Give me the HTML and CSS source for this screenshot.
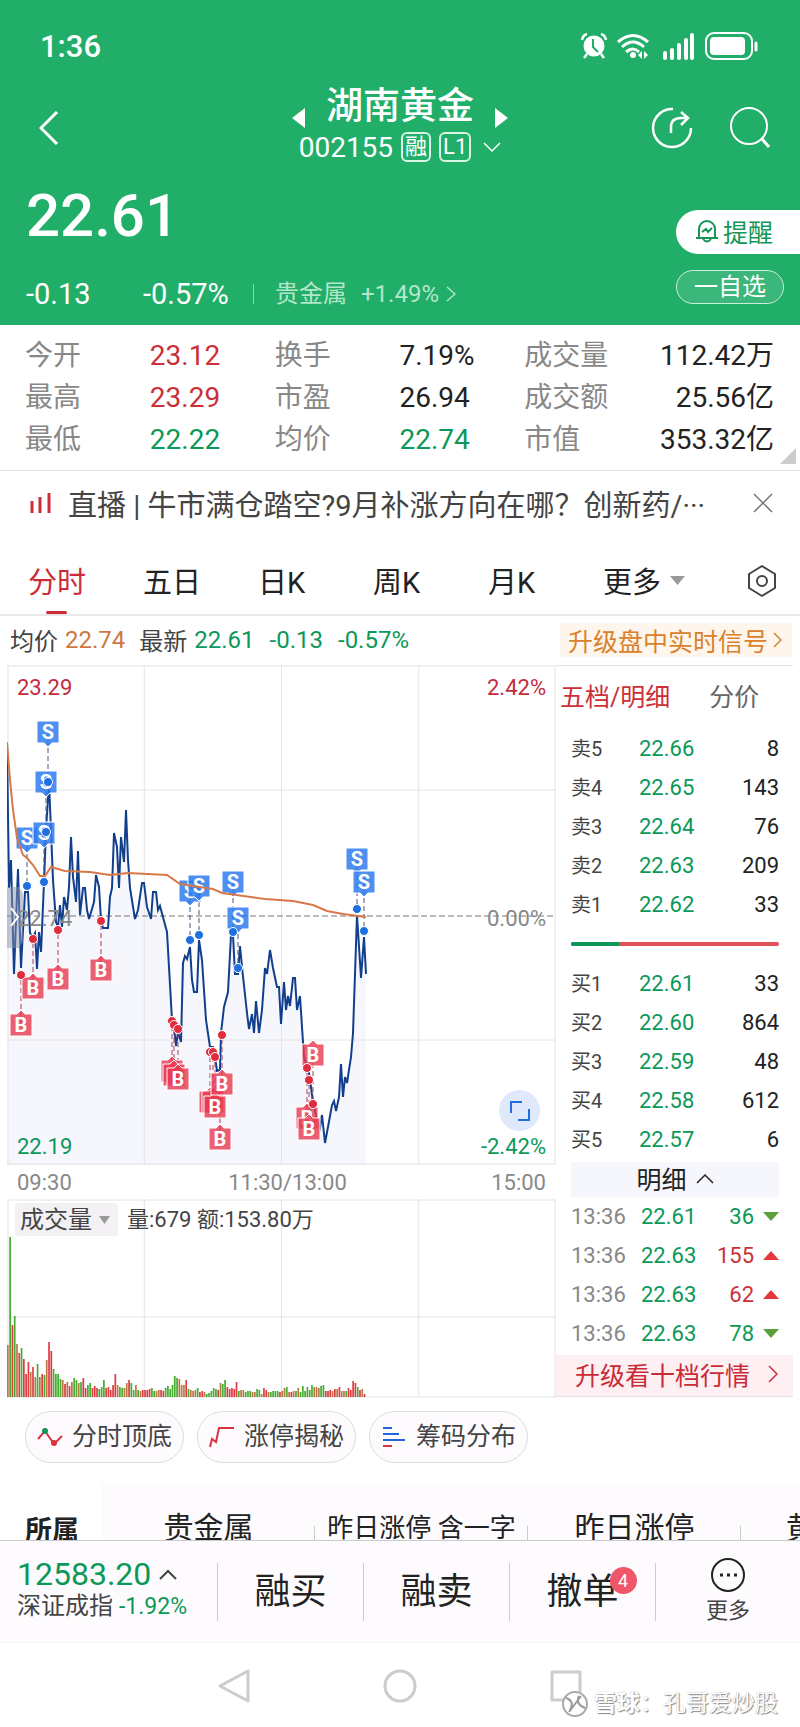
FILE: index.html
```html
<!DOCTYPE html>
<html lang="zh-CN">
<head>
    <meta charset="UTF-8">
    <meta name="viewport" content="width=device-width, initial-scale=1.0">
    <title>湖南黄金 002155</title>
    <link rel="stylesheet" href="styles.css">
</head>
<body>
    <header class="header">
        <div class="status-bar">
            <span class="clock">1:36</span>
            <svg class="status-icons" width="178" height="30" viewBox="0 0 178 30" fill="none" stroke="#fff" stroke-width="2">
                <circle cx="14" cy="15" r="10.500" fill="#fff" stroke="none"/>
                <path d="M13 8v8l5 5" stroke="#21ae69"/>
                <path d="M2 9q1-5 5-6M26 9q-1-5-5-6M7 23l-3 4M21 23l3 4" stroke-width="2.500"/>
                <path d="M38 11q15-13 30 0M42 16q11-10 22 0M46 21q7-6 13 0" stroke-width="3"/>
                <circle cx="53" cy="24" r="3" fill="#fff" stroke="none"/>
                <path d="M58 24l4-4v8zM68 24l-4-4v8z" fill="#fff" stroke="none"/>
                <path d="M85 22v5M92 19v8M99 14v13M106 9v18M112 4v23" stroke-width="4" stroke-linecap="round"/>
                <rect x="126" y="2" width="46" height="26" rx="8"/>
                <rect x="130" y="6" width="35" height="18" rx="4" fill="#fff" stroke="none"/>
                <path d="M176 12v7" stroke-width="3" stroke-linecap="round"/>
            </svg>
        </div>
        <div class="topbar">
            <button class="icon-btn back" aria-label="返回">
                <svg width="20" height="34" viewBox="0 0 20 34" fill="none" stroke="#fff" stroke-width="3"><path d="M18 1L2 17l16 16"/></svg>
            </button>
            <div class="stock">
                <div class="stock-name">
                    <svg width="14" height="20" viewBox="0 0 14 20"><path d="M13 0v20L0 10z" fill="#fff"/></svg>
                    <h1>湖南黄金</h1>
                    <svg width="14" height="20" viewBox="0 0 14 20"><path d="M1 0v20l13-10z" fill="#fff"/></svg>
                </div>
                <div class="stock-code">
                    <span>002155</span><span class="tag">融</span><span class="tag">L1</span>
                    <svg width="18" height="12" viewBox="0 0 18 12" fill="none" stroke="#fff" stroke-width="1.500"><path d="M1 2l8 8 8-8"/></svg>
                </div>
            </div>
            <div class="actions">
                <button class="icon-btn" aria-label="分享">
                    <svg width="42" height="42" viewBox="0 0 42 42" fill="none" stroke="#fff" stroke-width="2.500"><path d="M22 2a19 19 0 1 0 18 19"/><path d="M20 26v-6c0-6 4-9 10-9h6M30 5l7 6-7 7"/></svg>
                </button>
                <button class="icon-btn" aria-label="搜索">
                    <svg width="42" height="42" viewBox="0 0 42 42" fill="none" stroke="#fff" stroke-width="2"><circle cx="20" cy="19" r="18"/><path d="M33 32l7 8" stroke-width="3"/></svg>
                </button>
            </div>
        </div>
        <div class="summary">
            <div>
                <div class="price">22.61</div>
                <div class="change">
                    <span class="diff">-0.13</span>
                    <span class="rate">-0.57%</span>
                    <a href="#" class="industry">贵金属<span>+1.49%</span>
                        <svg width="10" height="16" viewBox="0 0 10 16" fill="none" stroke="currentColor" stroke-width="1.500"><path d="M1 1l8 7-8 7"/></svg>
                    </a>
                </div>
            </div>
            <div class="summary-buttons">
                <button class="remind">
                    <svg width="24" height="24" viewBox="0 0 24 24" fill="none" stroke="#159557" stroke-width="2"><path d="M4 19V10a8 8 0 0 1 16 0v9M1 19h22M8 20q4 5 8 0M7 13l4-3 2 3 4-4"/></svg>
                    提醒
                </button>
                <button class="watch">一自选</button>
            </div>
        </div>
    </header>

    <dl class="stats">
        <dt>今开</dt><dd class="red">23.12</dd><dt>换手</dt><dd>7.19%</dd><dt>成交量</dt><dd>112.42万</dd>
        <dt>最高</dt><dd class="red">23.29</dd><dt>市盈</dt><dd>26.94</dd><dt>成交额</dt><dd>25.56亿</dd>
        <dt>最低</dt><dd class="green">22.22</dd><dt>均价</dt><dd class="green">22.74</dd><dt>市值</dt><dd>353.32亿</dd>
    </dl>

    <div class="news">
        <svg width="22" height="20" viewBox="0 0 22 20" stroke="#cf2c3a" stroke-width="3"><path d="M2 8v12M10 4v16M19 0v20"/></svg>
        <a href="#">直播 | 牛市满仓踏空?9月补涨方向在哪？创新药/···</a>
        <button class="icon-btn" aria-label="关闭">
            <svg width="20" height="20" viewBox="0 0 20 20" stroke="#777" stroke-width="1.500"><path d="M1 1l18 18M19 1L1 19"/></svg>
        </button>
    </div>

    <nav class="tabs">
        <button class="tab active">分时</button>
        <button class="tab">五日</button>
        <button class="tab">日K</button>
        <button class="tab">周K</button>
        <button class="tab">月K</button>
        <button class="tab">更多 <svg width="15" height="9" viewBox="0 0 15 9"><path d="M0 0h15L7.500 9z" fill="#999"/></svg></button>
        <button class="settings" aria-label="设置">
            <svg width="32" height="34" viewBox="0 0 32 34" fill="none" stroke="#444" stroke-width="2"><path d="M16 2l13 8v14l-13 8-13-8V10z" stroke-linejoin="round"/><circle cx="16" cy="17" r="5"/></svg>
        </button>
    </nav>

    <div class="quote-line">
        <span>均价</span><span class="orange">22.74</span>
        <span class="latest">最新</span><span class="green">22.61</span>
        <span class="green gap">-0.13</span><span class="green gap">-0.57%</span>
        <a href="#" class="signal">升级盘中实时信号 <svg width="9" height="16" viewBox="0 0 9 16" fill="none" stroke="#d9822b" stroke-width="1.500"><path d="M1 1l7 7-7 7"/></svg></a>
    </div>

    <main class="board">
        <section class="charts">
            <div class="chart-box">
                <svg id="priceChart" class="chart" viewBox="0 0 549 500"></svg>
                <button class="expand" aria-label="全屏">
                    <svg width="20" height="20" viewBox="0 0 20 20" fill="none" stroke="#1e6fe0" stroke-width="2"><path d="M1 12V1h11M19 8v11H8"/></svg>
                </button>
            </div>
            <div class="times"><span>09:30</span><span class="noon">11:30/13:00</span><span>15:00</span></div>
            <div class="chart-box">
                <svg id="volumeChart" class="chart" viewBox="0 0 549 199"></svg>
                <div class="volume-head">
                    <label class="indicator">
                        <select aria-label="指标"><option>成交量</option></select>
                        <svg width="11" height="8" viewBox="0 0 11 8"><path d="M0 0h11L5.500 8z" fill="#999"/></svg>
                    </label>
                    <span>量:679 额:153.80万</span>
                </div>
            </div>
        </section>

        <section class="orders">
            <div class="order-tabs"><button class="red">五档/明细</button><button>分价</button></div>
            <table class="levels">
                <tr><td>卖5</td><td>22.66</td><td>8</td></tr>
                <tr><td>卖4</td><td>22.65</td><td>143</td></tr>
                <tr><td>卖3</td><td>22.64</td><td>76</td></tr>
                <tr><td>卖2</td><td>22.63</td><td>209</td></tr>
                <tr><td>卖1</td><td>22.62</td><td>33</td></tr>
            </table>
            <div class="ratio"><div class="ratio-sell" style="width: 23%"></div></div>
            <table class="levels">
                <tr><td>买1</td><td>22.61</td><td>33</td></tr>
                <tr><td>买2</td><td>22.60</td><td>864</td></tr>
                <tr><td>买3</td><td>22.59</td><td>48</td></tr>
                <tr><td>买4</td><td>22.58</td><td>612</td></tr>
                <tr><td>买5</td><td>22.57</td><td>6</td></tr>
            </table>
            <button class="detail-toggle">明细 <svg width="18" height="11" viewBox="0 0 18 11" fill="none" stroke="#222" stroke-width="1.500"><path d="M1 10l8-8 8 8"/></svg></button>
            <table class="ticks">
                <tr><td>13:36</td><td>22.61</td><td class="green">36</td><td><i class="down"></i></td></tr>
                <tr><td>13:36</td><td>22.63</td><td class="red">155</td><td><i class="up"></i></td></tr>
                <tr><td>13:36</td><td>22.63</td><td class="red">62</td><td><i class="up"></i></td></tr>
                <tr><td>13:36</td><td>22.63</td><td class="green">78</td><td><i class="down"></i></td></tr>
            </table>
            <a href="#" class="upgrade">升级看十档行情 <svg width="10" height="18" viewBox="0 0 10 18" fill="none" stroke="#c92c38" stroke-width="1.500"><path d="M1 1l8 8-8 8"/></svg></a>
        </section>
    </main>

    <div class="tools">
        <button>
            <svg width="26" height="20" viewBox="0 0 26 20" fill="none" stroke="#d8333f" stroke-width="2"><path d="M1 12l7-8 9 13 8-8"/><circle cx="8" cy="4" r="3" fill="#12945a" stroke="none"/><circle cx="17" cy="16" r="3" fill="#d8333f" stroke="none"/></svg>
            <span>分时顶底</span>
        </button>
        <button>
            <svg width="26" height="22" viewBox="0 0 26 22" fill="none" stroke="#d8333f" stroke-width="2"><path d="M1 21l2-8 4 3L10 2h15"/></svg>
            <span>涨停揭秘</span>
        </button>
        <button>
            <svg width="26" height="22" viewBox="0 0 26 22" stroke="#2166dc" stroke-width="2"><path d="M2 2h9M2 8h16M2 14h22"/><path d="M2 20h9" stroke="#d8333f"/></svg>
            <span>筹码分布</span>
        </button>
    </div>

    <div class="concepts">
        <strong>所属</strong>
        <div class="concept-list">
            <a href="#">贵金属</a><a href="#" class="small">昨日涨停 含一字</a><a href="#">昨日涨停</a><a href="#">黄金概念</a>
        </div>
    </div>

    <footer class="trade-bar">
        <a href="#" class="index">
            <span class="index-value">12583.20 <svg width="18" height="11" viewBox="0 0 18 11" fill="none" stroke="#444" stroke-width="2"><path d="M1 10l8-8 8 8"/></svg></span>
            <span class="index-name">深证成指 <span class="green">-1.92%</span></span>
        </a>
        <button>融买</button>
        <button>融卖</button>
        <button><span class="cancel">撤单<span class="badge">4</span></span></button>
        <button class="more-btn">
            <svg width="34" height="34" viewBox="0 0 34 34" fill="none" stroke="#222" stroke-width="2"><circle cx="17" cy="17" r="16"/><path d="M9 17h3M16 17h3M23 17h3" stroke-width="3"/></svg>
            更多
        </button>
    </footer>

    <div class="system-nav">
        <svg width="34" height="34" viewBox="0 0 34 34"><path d="M31 2v30L3 17z"/></svg>
        <svg width="34" height="34" viewBox="0 0 34 34"><circle cx="17" cy="17" r="15"/></svg>
        <svg width="34" height="34" viewBox="0 0 34 34"><rect x="3" y="3" width="28" height="28"/></svg>
        <div class="author">
            <svg width="28" height="28" viewBox="0 0 28 28" fill="none"><circle cx="14" cy="14" r="12" fill="#fff" stroke="#aaa" stroke-width="2"/><path d="M5 8q9 3 4 12M18 6q-4 8 6 12M20 6L8 22" stroke="#999" stroke-width="2"/></svg>
            <b>雪球</b>：孔哥爱炒股
        </div>
    </div>

    <script>
        const price = "0,77 2,223 4,195 7,309 9,255 11,204 14,303 18,227 21,227 23,268 26,272 28,268 30,304 32,267 34,287 37,217 39,165 42,118 44,165 46,215 49,257 51,262 53,240 55,262 57,232 60,245 62,222 64,172 66,212 69,237 71,186 73,250 76,223 78,223 80,245 82,254 87,237 89,210 92,222 94,255 96,263 101,263 103,232 105,223 107,168 110,182 112,223 114,172 117,197 119,145 121,195 123,223 128,254 131,245 135,218 137,218 140,242 144,254 146,227 149,227 151,245 153,241 160,267 165,355 167,362 169,381 171,367 174,377 176,298 178,291 180,294 183,282 185,315 187,327 190,327 192,275 195,295 199,355 203,382 206,382 208,392 210,406 213,405 214,368 217,342 221,327 224,270 226,270 228,309 231,309 233,281 235,302 240,348 242,364 245,349 247,368 249,336 252,368 255,345 258,303 260,309 263,285 266,303 270,322 272,322 274,359 277,317 279,345 281,331 283,341 286,313 288,313 290,345 293,331 295,362 297,392 302,408 304,422 306,438 311,458 313,463 315,450 318,478 321,462 325,440 327,436 329,446 332,432 334,399 336,432 338,412 340,418 344,392 346,368 350,250 354,313 357,272 359,309";
        const average = "0,77 3,115 6,145 10,173 16,190 20,193 26,200 33,211 38,211 44,202 58,206 83,207 103,210 121,208 160,210 173,219 186,221 206,224 215,228 258,234 286,236 306,240 320,246 336,249 359,252";

        // side, tag x, tag y, dot x, dot y
        const trades = [
            ["S", 41, 67, 41, 117], ["S", 39, 117, 39, 167], ["S", 20, 173, 20, 221], ["S", 37, 168, 37, 217],
            ["S", 183, 226, 183, 275], ["S", 192, 221, 192, 270], ["S", 226, 217, 226, 267], ["S", 231, 253, 231, 303],
            ["S", 350, 194, 350, 244], ["S", 357, 217, 357, 266],
            ["B", 14, 360, 14, 310], ["B", 26, 323, 26, 274], ["B", 51, 314, 51, 265], ["B", 94, 305, 94, 256],
            ["B", 165, 406, 165, 356], ["B", 167, 410, 167, 360], ["B", 171, 414, 171, 364],
            ["B", 203, 437, 203, 387], ["B", 206, 437, 206, 387], ["B", 208, 442, 208, 392],
            ["B", 213, 474, 213, 424], ["B", 215, 419, 215, 370],
            ["B", 300, 453, 300, 403], ["B", 302, 464, 302, 415], ["B", 306, 390, 306, 439]
        ];

        function grid(width, height, rows) {
            let s = "";
            for (let i = 0; i < 5; i++) {
                const x = Math.min(Math.max(i * width / 4, 1), width - 1);
                s += `<line class="grid" x1="${x}" x2="${x}" y1="0" y2="${height}"/>`;
            }
            for (const y of rows) s += `<line class="grid" x1="0" x2="${width}" y1="${y}" y2="${y}"/>`;
            return s;
        }

        // a tag whose middle lies under a later tag shows no letter
        function covered(i) {
            return trades.slice(i + 1).some(t => Math.abs(t[1] - trades[i][1]) < 7 && Math.abs(t[2] - trades[i][2]) < 9);
        }

        let svg = `<polygon class="area" points="0,500 ${price} 359,500"/>` + grid(549, 500, [1, 125, 375, 499]);
        svg += `<line class="middle" x1="0" x2="549" y1="251" y2="251"/>`;
        svg += `<polyline class="price-line" points="${price}"/>`;
        for (const [side, x, y, dx, dy] of trades) {
            svg += `<line class="link ${side}" x1="${dx}" y1="${y}" x2="${dx}" y2="${dy}"/>`;
        }
        trades.forEach(([side, x, y], i) => {
            const shape = side == "S"
                ? `M${x - 11} ${y - 11}h22v22h-7l-4 4-4-4h-7z`
                : `M${x - 11} ${y + 11}h22v-22h-7l-4-4-4 4h-7z`;
            svg += `<g class="mark ${side}"><path d="${shape}"/>`;
            if (!covered(i)) svg += `<text x="${x}" y="${y + 7}">${side}</text>`;
            svg += `</g>`;
        });
        for (const [side, x, y, dx, dy] of trades) {
            if (dy != 424) svg += `<circle class="dot ${side}" cx="${dx}" cy="${dy}" r="4.5"/>`;
        }
        svg += `<polyline class="avg-line" points="${average}"/>`;
        svg += `<path class="handle" d="M0 222h12l4 6v48l-4 7H0z"/><path class="handle-arrow" d="M4 243l7 9-7 9"/>`;
        svg += `<text class="scale up" x="10" y="30">23.29</text><text class="scale up end" x="539" y="30">2.42%</text>`;
        svg += `<text class="scale" x="10" y="261">22.74</text><text class="scale end" x="539" y="261">0.00%</text>`;
        svg += `<text class="scale low" x="10" y="489">22.19</text><text class="scale low end" x="539" y="489">-2.42%</text>`;
        document.getElementById("priceChart").innerHTML = svg;

        const volume = [52,160,72,81,53,44,49,38,23,35,25,30,20,33,20,23,22,37,55,46,28,23,23,18,17,13,15,11,15,19,17,14,15,19,9,12,14,9,11,9,8,10,17,9,10,7,12,23,12,10,9,9,14,17,14,7,12,7,6,7,7,7,8,9,6,6,7,7,6,9,11,8,12,21,19,18,12,12,17,8,7,6,7,9,5,6,5,3,4,6,9,8,7,14,13,17,10,8,9,8,15,6,7,7,5,6,6,5,5,8,7,3,9,7,5,5,6,6,6,5,6,9,10,5,5,6,6,9,5,11,6,10,7,12,10,10,9,11,12,6,6,7,6,8,8,10,6,6,6,9,7,16,14,10,7,8,3];
        const colors = "mgrgmrgrrrmrmgmrgmrrggggmrmrmggmgrrggrrrgggrrrrrmggmmrggmgmrrrrggmmrrggggggmmmrgmmmgrrmgggggrmggrrrrrgmmgggmmggmrrmggggrmmgmrmgmggggggmmmggrrrmrmrmmgrrrrgrmrm";
        const fills = { r: "#de3c42", g: "#45ad30", m: "#b97846" };
        let bars = grid(549, 199, [1, 118, 198]);
        volume.forEach((h, i) => {
            bars += `<rect x="${i * 359 / volume.length}" y="${198 - h}" width="1.7" height="${h}" fill="${fills[colors[i]] || fills.r}"/>`;
        });
        document.getElementById("volumeChart").innerHTML = bars;
    </script>
</body>
</html>
```
FILE: styles.css
```css
* {
    box-sizing: border-box;
}
body {
    margin: 0;
    font-family: Roboto, "Noto Sans CJK SC", sans-serif;
    font-size: 25px;
    color: #222;
    background: #fff;
}
button, select {
    font: inherit;
    color: inherit;
    background: none;
    border: none;
    padding: 0;
    cursor: pointer;
}
a {
    color: inherit;
    text-decoration: none;
}
svg {
    flex: none;
}
.red {
    color: #cb3038;
}
.green {
    color: #0c9858;
}
.orange {
    color: #cd7744;
}

/* header */
.header {
    background: #21ae69;
    color: #fff;
    height: 325px;
}
.status-bar {
    display: flex;
    justify-content: space-between;
    align-items: center;
    height: 82px;
    padding: 10px 42px 0 40px;
}
.clock {
    font-size: 31px;
    font-weight: 500;
}
.topbar {
    display: grid;
    grid-template-columns: 1fr auto 1fr;
    align-items: center;
    height: 84px;
    padding: 0 29px;
}
.icon-btn {
    display: flex;
    align-items: center;
}
.back {
    padding: 8px 0 0 10px;
}
.stock-name {
    display: flex;
    justify-content: center;
    align-items: flex-end;
    gap: 20px;
    height: 46px;
}
.stock-name h1 {
    margin: 0;
    font-size: 37px;
    font-weight: 500;
    line-height: 42px;
}
.stock-code {
    display: flex;
    justify-content: center;
    align-items: center;
    gap: 8px;
    height: 38px;
    font-size: 28px;
}
.tag {
    min-width: 30px;
    padding: 0 2px;
    border: 2px solid #d9f3e5;
    border-radius: 6px;
    font-size: 22px;
    line-height: 26px;
    text-align: center;
}
.stock-code svg {
    margin-left: 4px;
}
.actions {
    display: flex;
    justify-content: flex-end;
    gap: 36px;
    padding-top: 8px;
}
.summary {
    display: flex;
    justify-content: space-between;
    padding-left: 26px;
}
.price {
    margin-top: 20px;
    font-size: 60px;
    font-weight: 500;
    line-height: 60px;
}
.change {
    display: flex;
    align-items: center;
    margin-top: 30px;
    font-size: 29px;
    line-height: 36px;
}
.diff {
    width: 117px;
}
.rate {
    width: 110px;
}
.industry {
    display: flex;
    align-items: center;
    height: 20px;
    padding-left: 21px;
    border-left: 1px solid #8cd6ae;
    font-size: 24px;
    color: #b4e6ca;
}
.industry span {
    margin: 0 7px 0 14px;
}
.summary-buttons {
    display: flex;
    flex-direction: column;
    gap: 16px;
    width: 124px;
    padding-top: 44px;
}
.remind {
    display: flex;
    align-items: center;
    gap: 4px;
    height: 44px;
    padding: 0 0 3px 19px;
    border-radius: 22px 0 0 22px;
    background: #fff;
    color: #159557;
}
.watch {
    width: 108px;
    height: 34px;
    border: 1px solid #c8eed9;
    border-radius: 17px;
    background: #3cb77b;
    font-size: 24px;
    line-height: 30px;
}

/* key figures */
.stats {
    position: relative;
    display: grid;
    grid-template-columns: repeat(6, 1fr);
    margin: 0;
    padding: 10px 26px 9px 25px;
    border-bottom: 1px solid #e4e4e4;
    font-size: 28px;
    line-height: 42px;
}
.stats::after {
    content: "";
    position: absolute;
    right: 4px;
    bottom: 6px;
    border-left: 16px solid transparent;
    border-bottom: 16px solid #ccc;
}
.stats dt {
    color: #888;
}
.stats dd {
    margin: 0;
    white-space: nowrap;
}
.stats dd:nth-of-type(3n) {
    text-align: right;
}
.news {
    display: flex;
    align-items: center;
    height: 66px;
    padding: 0 27px 2px 30px;
    font-size: 29px;
    color: #444;
}
.news a {
    flex: 1;
    margin-left: 16px;
    white-space: nowrap;
}

/* period tabs */
.tabs {
    display: flex;
    height: 79px;
    padding: 11px 22px 0 28px;
    border-bottom: 2px solid #e8e8e8;
    font-size: 29px;
}
.tab {
    display: flex;
    align-items: center;
    position: relative;
    width: 115px;
    height: 66px;
    padding-bottom: 2px;
}
.tab svg {
    margin-left: 9px;
}
.settings {
    display: flex;
    align-items: center;
    height: 66px;
    margin-left: auto;
}
.tab.active {
    color: #cf2c3a;
}
.tab.active::after {
    content: "";
    position: absolute;
    left: 18px;
    bottom: 0;
    width: 21px;
    height: 3px;
    border-radius: 2px;
    background: #cf2c3a;
}
.quote-line {
    display: flex;
    align-items: center;
    height: 49px;
    padding: 0 8px 2px 10px;
    font-size: 24px;
    color: #444;
    white-space: nowrap;
}
.quote-line .orange, .latest + .green {
    margin-left: 7px;
}
.latest {
    margin-left: 14px;
}
.gap {
    margin-left: 15px;
}
.signal {
    display: flex;
    align-items: center;
    gap: 5px;
    height: 34px;
    margin-left: auto;
    padding: 0 10px 0 8px;
    background: #fef6ec;
    color: #d9822b;
    font-size: 25px;
}

/* charts */
.board {
    display: grid;
    grid-template-columns: 549fr 237fr;
    padding: 0 7px;
}
.chart-box {
    position: relative;
}
.chart {
    display: block;
    width: 100%;
}
.grid {
    stroke: #e4e4e6;
    stroke-width: 1;
}
.area {
    fill: #f6f6fd;
}
.middle {
    stroke: #777;
    stroke-dasharray: 6 3;
}
.price-line {
    fill: none;
    stroke: #123f8c;
    stroke-width: 2;
}
.avg-line {
    fill: none;
    stroke: #d87848;
    stroke-width: 2;
}
.link {
    stroke-dasharray: 5 3;
}
.link.S {
    stroke: #44557a;
}
.link.B {
    stroke: #a83a58;
}
.mark path {
    stroke: #fff;
    stroke-width: 1;
}
.mark.S {
    fill: #2f7bee;
    fill-opacity: 0.85;
}
.mark.B {
    fill: #e83a50;
    fill-opacity: 0.8;
}
.mark text {
    fill: #fff;
    fill-opacity: 1;
    font-size: 20px;
    font-weight: 700;
    text-anchor: middle;
}
.dot {
    stroke: #fff;
    stroke-width: 1;
}
.dot.S {
    fill: #1e6fe0;
}
.dot.B {
    fill: #e02c3c;
}
.handle {
    fill: #8b93ad;
    fill-opacity: 0.5;
}
.handle-arrow {
    fill: none;
    stroke: #fff;
    stroke-width: 2;
}
.scale {
    fill: #888;
    font-size: 22px;
}
.scale.up {
    fill: #c22c3c;
}
.scale.low {
    fill: #0c9858;
}
.scale.end {
    text-anchor: end;
}
.expand {
    position: absolute;
    right: 16px;
    bottom: 34px;
    display: flex;
    align-items: center;
    justify-content: center;
    width: 41px;
    height: 41px;
    border-radius: 50%;
    background: #e0e9fb;
}
.times {
    display: flex;
    justify-content: space-between;
    height: 34px;
    padding: 0 10px;
    font-size: 22px;
    line-height: 36px;
    color: #888;
}
.noon {
    margin-left: 12px;
}
.volume-head {
    position: absolute;
    top: 4px;
    left: 8px;
    display: flex;
    align-items: center;
    gap: 9px;
    font-size: 22px;
    line-height: 30px;
    color: #444;
}
.indicator {
    display: flex;
    align-items: center;
    width: 103px;
    height: 33px;
    padding-left: 5px;
    border-radius: 3px;
    background: #f3f1f3;
    font-size: 24px;
}
.indicator select {
    appearance: none;
    width: 79px;
    height: 33px;
}

/* order book */
.order-tabs {
    display: flex;
    align-items: center;
    gap: 39px;
    height: 64px;
    padding: 0 0 6px 4px;
    border-top: 1px solid #e4e4e6;
    color: #666;
}
.levels, .ticks {
    width: calc(100% - 29px);
    margin-left: 15px;
    border-collapse: collapse;
    font-size: 22px;
}
.levels td, .ticks td {
    height: 39px;
    padding: 0;
    line-height: 30px;
}
.levels td:first-child {
    width: 68px;
    font-size: 20px;
    color: #444;
}
.levels td:nth-child(2), .ticks td:nth-child(2) {
    color: #0c9858;
}
.levels td:last-child {
    text-align: right;
}
.ratio {
    height: 4px;
    margin: 18px 14px 18px 15px;
    border-radius: 2px;
    background: #e05256;
    overflow: hidden;
}
.ratio-sell {
    height: 4px;
    background: #0c9858;
}
.detail-toggle {
    display: flex;
    align-items: center;
    justify-content: center;
    gap: 9px;
    width: calc(100% - 29px);
    height: 35px;
    margin: 3px 0 0 15px;
    padding-bottom: 3px;
    background: #f6f6fd;
}
.ticks td:first-child {
    width: 70px;
    color: #888;
}
.ticks td:nth-child(3) {
    text-align: right;
}
.ticks td:last-child {
    width: 25px;
}
.up, .down {
    display: block;
    margin-left: auto;
    width: 16px;
    border-left: 8px solid transparent;
    border-right: 8px solid transparent;
}
.up {
    border-bottom: 9px solid #e5383b;
}
.down {
    border-top: 9px solid #5ba03a;
}
.upgrade {
    display: flex;
    align-items: center;
    justify-content: space-between;
    height: 42px;
    margin-top: 2px;
    padding: 0 15px 3px 19px;
    border-bottom: 1px solid #e4e4e6;
    background: #fdeff2;
    color: #c92c38;
}

/* tools */
.tools {
    display: flex;
    gap: 13px;
    padding: 13px 25px 19px;
}
.tools button {
    display: flex;
    align-items: center;
    gap: 9px;
    height: 52px;
    padding: 0 11px;
    border: 1px solid #ddd;
    border-radius: 26px;
    background: #fdfbfd;
    color: #444;
}
.tools span {
    padding-bottom: 6px;
}
.concepts {
    display: flex;
    height: 59px;
    overflow: hidden;
    border-bottom: 1px solid #ccc;
    white-space: nowrap;
}
.concepts strong {
    width: 102px;
    flex: none;
    padding: 30px 0 0 25px;
    font-size: 27px;
    line-height: 38px;
}
.concept-list {
    display: flex;
    flex: 1;
    min-width: 0;
    padding-top: 26px;
    background: #fdfbfd;
    font-size: 30px;
    line-height: 40px;
}
.concept-list a {
    flex: none;
    width: 213px;
    text-align: center;
    background: linear-gradient(#ccc, #ccc) right 18px / 1px 34px no-repeat;
}
.concept-list .small {
    font-size: 26px;
}
.concept-list a:last-child {
    padding-left: 45px;
    text-align: left;
}

/* bottom bar */
.trade-bar {
    display: grid;
    grid-template-columns: 217fr 146fr 146fr 146fr 145fr;
    align-items: center;
    height: 102px;
    background: #fdfbfd;
    border-bottom: 1px solid #f8f4f8;
}
.trade-bar > button {
    height: 58px;
    border-left: 1px solid #ccc;
    font-size: 36px;
    line-height: 58px;
}
.index {
    display: flex;
    flex-direction: column;
    padding: 0 0 4px 17px;
    white-space: nowrap;
}
.index-value {
    display: flex;
    align-items: center;
    gap: 8px;
    font-size: 32px;
    line-height: 34px;
    color: #0c9858;
}
.index-name {
    font-size: 24px;
    line-height: 30px;
    color: #444;
}
.index-name .green {
    font-size: 23px;
}
.cancel {
    position: relative;
}
.badge {
    position: absolute;
    top: -4px;
    right: -18px;
    width: 27px;
    height: 27px;
    border-radius: 50%;
    background: #f0566a;
    color: #fff;
    font-size: 18px;
    line-height: 27px;
    text-align: center;
}
.trade-bar .more-btn {
    display: flex;
    flex-direction: column;
    align-items: center;
    justify-content: center;
    gap: 4px;
    font-size: 22px;
    line-height: 30px;
    color: #444;
}
.system-nav {
    position: relative;
    display: flex;
    justify-content: center;
    align-items: center;
    gap: 132px;
    height: 85px;
}
.system-nav > svg {
    fill: none;
    stroke: #ccc;
    stroke-width: 3;
    stroke-linejoin: round;
}
.author {
    position: absolute;
    right: 22px;
    bottom: 8px;
    display: flex;
    align-items: center;
    color: #fff;
    text-shadow: 1px 1px 1px #888, 0 0 1px #aaa;
    font-size: 23px;
    line-height: 32px;
}
.author svg {
    margin-right: 5px;
}
```
